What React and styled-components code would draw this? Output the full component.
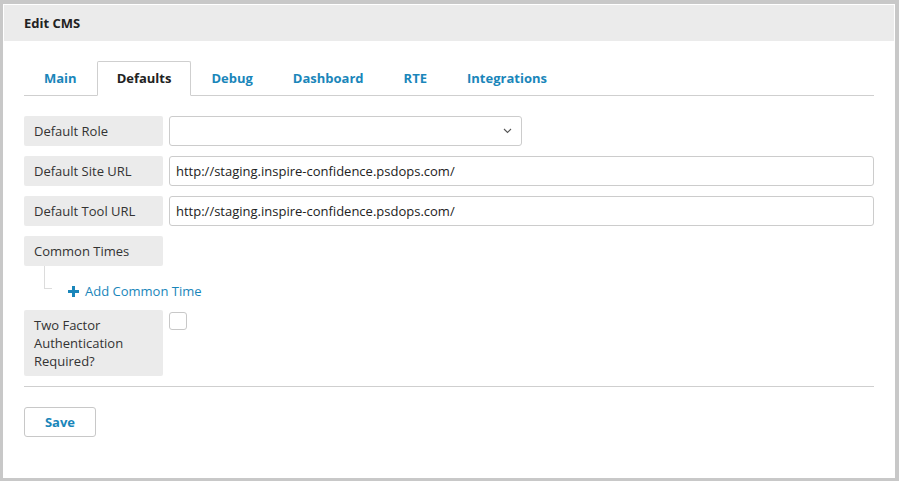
import React from "react";
import styled, { createGlobalStyle } from "styled-components";

const Global = createGlobalStyle`
  html, body { margin: 0; padding: 0; background: #c8c8c8; }
  body { font-family: "Open Sans", "Liberation Sans", sans-serif; font-size: 13px; color: #333; }
  * { box-sizing: border-box; }
`;

const LINK = "#1a86ba";

const Page = styled.div`
  width: 899px;
  height: 481px;
  padding: 4px 4px 3px 3px;
`;

const Panel = styled.div`
  width: 892px;
  height: 474px;
  background: #fff;
  padding: 1px 1px 0 1px;
`;

const Header = styled.div`
  height: 36px;
  background: #ebebeb;
  display: flex;
  align-items: center;
  padding-left: 20px;
  font-weight: 700;
  font-size: 13px;
  color: #222;
`;

const Body = styled.div`
  padding: 20px 20px 0 20px;
`;

const TabBar = styled.div`
  display: flex;
  border-bottom: 1px solid #cfcfcf;
`;

const Tab = styled.div`
  display: flex;
  align-items: center;
  padding: 0 19px 1px;
  height: 35px;
  margin-bottom: -1px;
  border: 1px solid ${(p) => (p.$active ? "#cfcfcf" : "transparent")};
  border-bottom: 1px solid ${(p) => (p.$active ? "#fff" : "transparent")};
  border-radius: 2px 2px 0 0;
  background: ${(p) => (p.$active ? "#fff" : "transparent")};
  font-weight: 700;
  font-size: 13px;
  color: ${(p) => (p.$active ? "#222" : LINK)};
  cursor: pointer;
`;

const Form = styled.div`
  display: flex;
  flex-direction: column;
  gap: 10px;
  margin-top: 20px;
`;

const Row = styled.div`
  display: flex;
  align-items: flex-start;
  gap: 6px;
`;

const Label = styled.div`
  width: 139px;
  min-height: 30px;
  flex-shrink: 0;
  background: #ebebeb;
  border-radius: 2px;
  padding: 6px 10px;
  line-height: 18px;
  color: #333;
  font-size: 13px;
`;

const Input = styled.input`
  flex: 1;
  height: 30px;
  border: 1px solid #cccccc;
  border-radius: 3px;
  padding: 0 6px;
  font-family: "Open Sans", "Liberation Sans", sans-serif;
  font-size: 13px;
  color: #222;
  outline: none;
`;

const SelectBox = styled.div`
  width: 353px;
  height: 30px;
  border: 1px solid #cccccc;
  border-radius: 3px;
  display: flex;
  align-items: center;
  justify-content: flex-end;
  padding-right: 9px;
`;

const Group = styled.div`
  display: flex;
  flex-direction: column;
`;

const SubRow = styled.div`
  display: flex;
  align-items: flex-start;
  height: 34px;
  padding-left: 20px;
`;

const TreeLine = styled.div`
  width: 8px;
  height: 23px;
  border-left: 1px solid #dcdcdc;
  border-bottom: 1px solid #dcdcdc;
`;

const AddLink = styled.a`
  display: flex;
  align-items: center;
  gap: 6px;
  margin-left: 16px;
  margin-top: 15px;
  line-height: 20px;
  color: ${LINK};
  font-size: 13px;
  text-decoration: none;
  cursor: pointer;
`;

const Checkbox = styled.div`
  width: 18px;
  height: 18px;
  margin-top: 2px;
  border: 1px solid #c8c8c8;
  border-radius: 3px;
  background: #fff;
`;

const Divider = styled.div`
  height: 1px;
  background: #cfcfcf;
  margin-top: 10px;
`;

const SaveButton = styled.button`
  margin-top: 20px;
  width: 72px;
  height: 30px;
  border: 1px solid #c8c8c8;
  border-radius: 3px;
  background: #fff;
  color: ${LINK};
  font-family: "Open Sans", "Liberation Sans", sans-serif;
  font-weight: 700;
  font-size: 13px;
  cursor: pointer;
`;

const tabs = ["Main", "Defaults", "Debug", "Dashboard", "RTE", "Integrations"];
const URL = "http://staging.inspire-confidence.psdops.com/";

export default function App() {
  return (
    <>
      <Global />
      <Page>
        <Panel>
          <Header>Edit CMS</Header>
          <Body>
            <TabBar>
              {tabs.map((t) => (
                <Tab key={t} $active={t === "Defaults"}>
                  {t}
                </Tab>
              ))}
            </TabBar>
            <Form>
              <Row>
                <Label>Default Role</Label>
                <SelectBox>
                  <svg width="9" height="6" viewBox="0 0 9 6">
                    <path d="M1 1 L4.5 4.5 L8 1" fill="none" stroke="#555" strokeWidth="1.1" />
                  </svg>
                </SelectBox>
              </Row>
              <Row>
                <Label>Default Site URL</Label>
                <Input defaultValue={URL} />
              </Row>
              <Row>
                <Label>Default Tool URL</Label>
                <Input defaultValue={URL} />
              </Row>
              <Group>
                <Row>
                  <Label>Common Times</Label>
                </Row>
                <SubRow>
                  <TreeLine />
                  <AddLink>
                    <svg width="11" height="11" viewBox="0 0 11 11">
                      <path d="M4 0h3v4h4v3H7v4H4V7H0V4h4z" fill={LINK} />
                    </svg>
                    Add Common Time
                  </AddLink>
                </SubRow>
              </Group>
              <Row>
                <Label>
                  Two Factor
                  <br />
                  Authentication
                  <br />
                  Required?
                </Label>
                <Checkbox />
              </Row>
            </Form>
            <Divider />
            <SaveButton>Save</SaveButton>
          </Body>
        </Panel>
      </Page>
    </>
  );
}
